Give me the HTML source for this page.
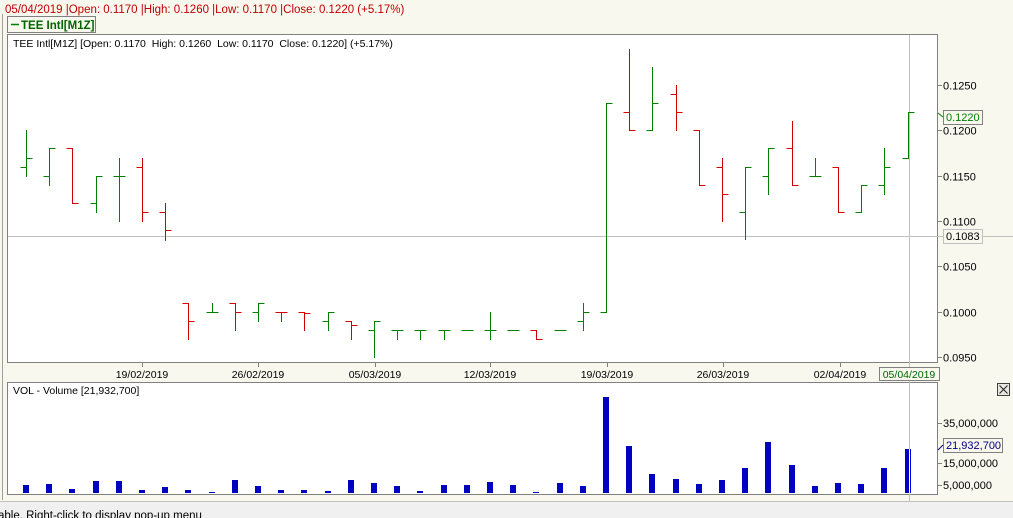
<!DOCTYPE html>
<html><head><meta charset="utf-8">
<style>
html,body{margin:0;padding:0;}
body{width:1013px;height:518px;overflow:hidden;background:#f9f8ef;font-family:"Liberation Sans",sans-serif;position:relative;}
svg{position:absolute;left:0;top:0;}
</style></head><body>
<svg id="s" width="1013" height="518" xmlns="http://www.w3.org/2000/svg" font-family="Liberation Sans, sans-serif" font-size="11">
<rect x="0" y="0" width="1013" height="518" fill="#f9f8ef"/>
<line x1="2.5" y1="14" x2="2.5" y2="500" stroke="#a0a0a0"/>
<text x="5" y="13" fill="#c00000" font-size="11.5">05/04/2019 |Open: 0.1170 |High: 0.1260 |Low: 0.1170 |Close: 0.1220 (+5.17%)</text>
<rect x="7.5" y="16.5" width="88" height="16" fill="#f9f8ef" stroke="#808080"/>
<line x1="11" y1="24.5" x2="19" y2="24.5" stroke="#008000" stroke-width="1.5"/>
<text x="21" y="29" fill="#006400" font-weight="bold" font-size="11.5">TEE Intl[M1Z]</text>
<rect x="7.5" y="34.5" width="930" height="328" fill="#fff" stroke="#808080"/>
<rect x="7.5" y="382.5" width="930" height="112" fill="#fff" stroke="#808080"/>
<text x="13" y="47" fill="#000" font-size="10.5" style="white-space:pre">TEE Intl[M1Z] [Open: 0.1170  High: 0.1260  Low: 0.1170  Close: 0.1220] (+5.17%)</text>
<text x="13" y="394" fill="#000" font-size="10.5">VOL - Volume [21,932,700]</text>
<g id="g"></g>
<rect x="0" y="501" width="1013" height="17" fill="#f0f0f0"/>
<line x1="0" y1="501.5" x2="1013" y2="501.5" stroke="#c0c0c0"/>
<text x="-2" y="519" fill="#000" font-size="11.5">able. Right-click to display pop-up menu</text>
</svg>
<script>
var g=document.getElementById('g'),h='';
function Y(p){return 85+(0.125-p)/0.005*45.33;}
var d=[[.116,.120,.115,.117],[.115,.118,.114,.118],[.118,.118,.112,.112],[.112,.115,.111,.115],[.115,.117,.110,.115],[.116,.117,.110,.111],[.111,.112,.1079,.109],[.101,.101,.097,.099],[.100,.101,.100,.100],[.101,.101,.098,.100],[.100,.101,.099,.101],[.100,.100,.099,.100],[.100,.100,.098,.0999],[.099,.100,.098,.100],[.099,.099,.097,.0985],[.098,.099,.095,.099],[.098,.098,.097,.098],[.098,.098,.097,.098],[.098,.098,.097,.098],[.098,.098,.098,.098],[.098,.100,.097,.098],[.098,.098,.098,.098],[.098,.098,.097,.097],[.098,.098,.098,.098],[.099,.101,.098,.100],[.100,.123,.100,.123],[.122,.129,.120,.120],[.120,.127,.120,.123],[.124,.125,.120,.122],[.120,.120,.114,.114],[.116,.117,.110,.113],[.111,.116,.108,.116],[.115,.118,.113,.118],[.118,.121,.114,.114],[.115,.117,.115,.115],[.116,.116,.111,.111],[.111,.114,.111,.114],[.114,.118,.113,.116],[.117,.122,.117,.122]];
var red=[2,5,6,7,9,11,12,14,22,26,28,29,30,33,35];
var vt=[485,484,489,481,481,490,487,490,492,480,486,490,490,491,480,483,486,491,485,485,482,485,492,483,486,397,446,474,479,484,480,468,442,465,486,483,484,468,449];
h+='<line x1="8" y1="236.5" x2="1013" y2="236.5" stroke="#c0c0c0"/>';
h+='<line x1="909.5" y1="35" x2="909.5" y2="501" stroke="#c0c0c0"/>';
for(var i=0;i<d.length;i++){
 var x=Math.round(26+i*23.2)+0.5,o=d[i],c=red.indexOf(i)>=0?'#d00000':'#008000';
 h+='<path d="M'+x+' '+Math.round(Y(o[1]))+'V'+(Math.round(Y(o[2]))+1)+'M'+(x-6)+' '+(Math.round(Y(o[0]))+0.5)+'H'+x+'M'+x+' '+(Math.round(Y(o[3]))+0.5)+'H'+(x+6)+'" stroke="'+c+'" fill="none"/>';
 var xv=Math.round(26+i*23.2)-3;
 if(i==38){h+='<rect x="'+(xv)+'" y="'+vt[i]+'" width="6" height="'+(493-vt[i])+'" fill="#0000c0"/><line x1="909.5" y1="'+vt[i]+'" x2="909.5" y2="493" stroke="#fff"/>';}
 else h+='<rect x="'+xv+'" y="'+vt[i]+'" width="6" height="'+(493-vt[i])+'" fill="#0000c0"/>';
}
[[.125,'0.1250'],[.120,'0.1200'],[.115,'0.1150'],[.110,'0.1100'],[.105,'0.1050'],[.100,'0.1000'],[.095,'0.0950']].forEach(function(a){var y=Math.round(Y(a[0]))+0.5;h+='<line x1="938" y1="'+y+'" x2="942" y2="'+y+'" stroke="#808080"/><text x="943" y="'+(y+4)+'" fill="#000">'+a[1]+'</text>';});
h+='<rect x="943.5" y="110.5" width="39" height="14" fill="#f9f8ef" stroke="#808080"/><text x="946" y="121" fill="#008000">0.1220</text><path d="M938 113L943 117" stroke="#008000" fill="none"/>';
h+='<rect x="943.5" y="229.5" width="39" height="14" fill="#f9f8ef" stroke="#c0c0c0"/><text x="946" y="240" fill="#000">0.1083</text>';
[[142,'19/02/2019'],[258,'26/02/2019'],[375,'05/03/2019'],[490,'12/03/2019'],[607,'19/03/2019'],[723,'26/03/2019'],[840,'02/04/2019']].forEach(function(a){h+='<line x1="'+(a[0]+.5)+'" y1="363" x2="'+(a[0]+.5)+'" y2="367" stroke="#808080"/><text x="'+a[0]+'" y="378" text-anchor="middle" fill="#000" font-size="10.5">'+a[1]+'</text>';});
h+='<rect x="879.5" y="367.5" width="60" height="13" fill="#f9f8ef" stroke="#808080"/><text x="909" y="378" text-anchor="middle" fill="#006400" font-size="10.5">05/04/2019</text>';
[[423,'35,000,000'],[463,'15,000,000'],[485,'5,000,000']].forEach(function(a){h+='<line x1="938" y1="'+(a[0]+.5)+'" x2="942" y2="'+(a[0]+.5)+'" stroke="#808080"/><text x="943" y="'+(a[0]+4)+'" fill="#000">'+a[1]+'</text>';});
h+='<rect x="943.5" y="438.5" width="59" height="14" fill="#f9f8ef" stroke="#808080"/><text x="946" y="449" fill="#000080">21,932,700</text><path d="M938 450L943 445" stroke="#000080" fill="none"/>';
h+='<rect x="997.5" y="383.5" width="12" height="12" fill="#e8e8e0" stroke="#404040"/><path d="M999.5 385.5L1007.5 393.5M1007.5 385.5L999.5 393.5" stroke="#202020"/>';
g.innerHTML=h;
</script>
</body></html>
